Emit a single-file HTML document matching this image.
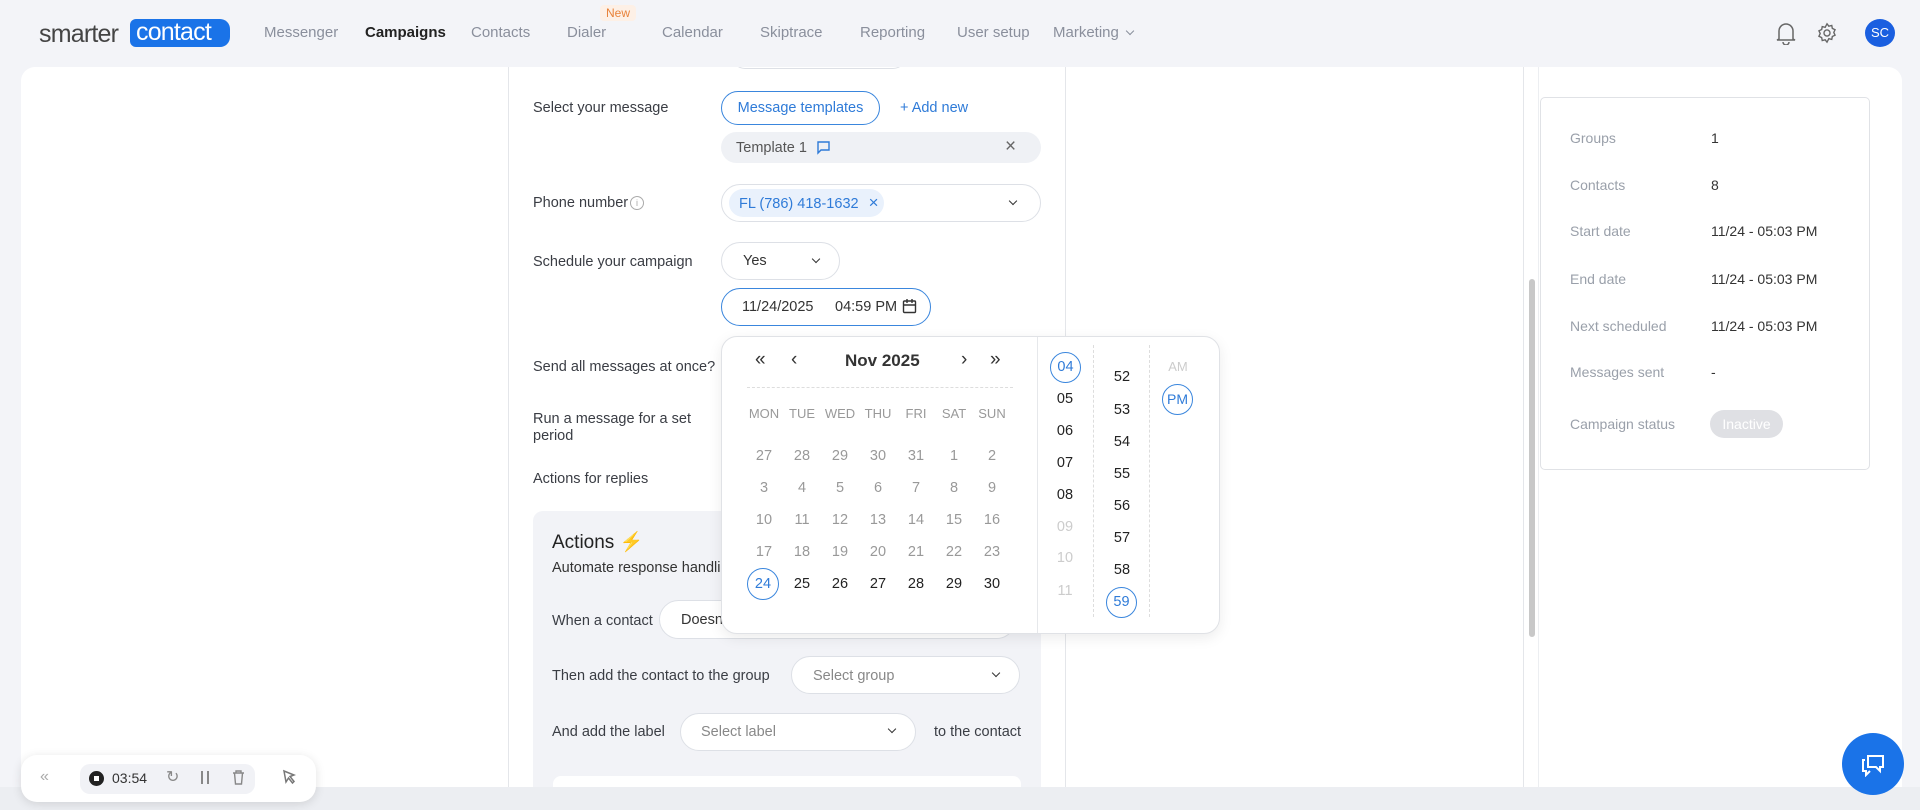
<!DOCTYPE html>
<html><head><meta charset="utf-8"><style>
*{box-sizing:border-box;margin:0;padding:0}
body{width:1920px;height:810px;overflow:hidden;background:#f3f4f8;font-family:"Liberation Sans",Arial,sans-serif;position:relative;color:#333}
.a{position:absolute;white-space:nowrap}
.nav{font-size:15px;color:#8a8f9c;top:24px}
.lbl{font-size:14.5px;color:#3a3d44}
.pill{position:absolute;border:1px solid #dde0e6;border-radius:22px;background:#fff}
.chev{position:absolute;width:7px;height:7px;border-right:1.6px solid #333;border-bottom:1.6px solid #333;transform:rotate(45deg)}
.cal{font-size:14.5px;text-align:center;width:30px;margin-left:-15px}
.wd{font-size:13px;text-align:center;width:36px;margin-left:-18px;color:#999}
.circ{border:1.3px solid #3a86dd;border-radius:50%;color:#2f7bd8}
.rl{font-size:14px;color:#9aa0aa}
.rv{font-size:14px;color:#333}
</style></head><body>
<!-- logo -->
<div class="a" style="left:39px;top:20px;font-size:25px;color:#444;letter-spacing:-0.8px">smarter</div>
<div class="a" style="left:130px;top:19px;width:100px;height:28px;background:#1a73e8;border-radius:6px 10px 10px 6px;color:#fff;font-size:25px;line-height:27px;padding-left:6px;letter-spacing:-0.8px">contact</div>
<div class="a nav" style="left:264px">Messenger</div>
<div class="a nav" style="left:365px;color:#222;font-weight:bold">Campaigns</div>
<div class="a nav" style="left:471px">Contacts</div>
<div class="a nav" style="left:567px">Dialer</div>
<div class="a" style="left:600px;top:5px;font-size:12px;color:#e8823a;background:#fdf0e6;padding:1px 6px;border-radius:4px">New</div>
<div class="a nav" style="left:662px">Calendar</div>
<div class="a nav" style="left:760px">Skiptrace</div>
<div class="a nav" style="left:860px">Reporting</div>
<div class="a nav" style="left:957px">User setup</div>
<div class="a nav" style="left:1053px">Marketing</div>
<div class="chev" style="left:1127px;top:28px;border-color:#8a8f9c;width:6px;height:6px;border-width:1.3px"></div>
<!-- bell -->
<svg class="a" style="left:1775px;top:21px" width="22" height="24" viewBox="0 0 22 24" fill="none" stroke="#666" stroke-width="1.5"><path d="M4 18V10a7 7 0 0 1 14 0v8l2 1H2z"/><path d="M8 21a3 3 0 0 0 6 0"/></svg>
<svg class="a" style="left:1816px;top:22px" width="22" height="22" viewBox="0 0 24 24" fill="none" stroke="#666" stroke-width="1.5"><circle cx="12" cy="12" r="3.3"/><path d="M12 2l2 2.6 3.2-.8.6 3.2 3 1.4-1.4 3 1.4 3-3 1.4-.6 3.2-3.2-.8L12 22l-2-2.6-3.2.8-.6-3.2-3-1.4 1.4-3-1.4-3 3-1.4.6-3.2 3.2.8z"/></svg>
<div class="a" style="left:1865px;top:19px;width:30px;height:28px;border-radius:50%;background:#1a5fe0;color:#fff;font-size:13px;text-align:center;line-height:28px">SC</div>
<!-- main panel -->
<div class="a" style="left:21px;top:67px;width:1881px;height:720px;background:#fff;border-radius:14px 14px 0 0"></div>
<div class="a" style="left:0;top:787px;width:1920px;height:23px;background:#eceef2"></div>
<div class="a" style="left:508px;top:67px;width:1px;height:720px;background:#e4e6ea"></div>
<div class="a" style="left:1065px;top:67px;width:1px;height:720px;background:#e4e6ea"></div>
<div class="a" style="left:1523px;top:67px;width:1px;height:720px;background:#e4e6ea"></div>
<div class="a" style="left:1529px;top:279px;width:6px;height:358px;background:#c8c8c8;border-radius:3px"></div>
<div class="a" style="left:1538px;top:67px;width:1px;height:720px;background:#eceef1"></div>
<!-- right card -->
<div class="a" style="left:1540px;top:97px;width:330px;height:373px;border:1px solid #e0e2e6;border-radius:5px"></div>
<div class="a rl" style="left:1570px;top:130px">Groups</div><div class="a rv" style="left:1711px;top:130px">1</div>
<div class="a rl" style="left:1570px;top:177px">Contacts</div><div class="a rv" style="left:1711px;top:177px">8</div>
<div class="a rl" style="left:1570px;top:223px">Start date</div><div class="a rv" style="left:1711px;top:223px">11/24 - 05:03 PM</div>
<div class="a rl" style="left:1570px;top:271px">End date</div><div class="a rv" style="left:1711px;top:271px">11/24 - 05:03 PM</div>
<div class="a rl" style="left:1570px;top:318px">Next scheduled</div><div class="a rv" style="left:1711px;top:318px">11/24 - 05:03 PM</div>
<div class="a rl" style="left:1570px;top:364px">Messages sent</div><div class="a rv" style="left:1711px;top:364px">-</div>
<div class="a rl" style="left:1570px;top:416px">Campaign status</div>
<div class="a" style="left:1710px;top:410px;width:73px;height:28px;border-radius:14px;background:#dfe0e4;color:#fff;font-size:14px;text-align:center;line-height:28px">Inactive</div>
<!-- form -->
<div class="a" style="left:731px;top:54px;width:176px;height:15px;border:1px solid #dde0e6;border-top:none;border-radius:0 0 14px 14px"></div>
<div class="a" style="left:725px;top:40px;width:190px;height:27px;background:#f3f4f8"></div>
<div class="a lbl" style="left:533px;top:100px">Select your message</div>
<div class="pill" style="left:721px;top:91px;width:159px;height:34px;border-color:#3a86dd;color:#2f7bd8;font-size:14.5px;text-align:center;line-height:32px">Message templates</div>
<div class="a" style="left:900px;top:100px;font-size:14.5px;color:#2f7bd8">+ Add new</div>
<div class="a" style="left:721px;top:132px;width:320px;height:31px;background:#eff1f5;border-radius:16px"></div>
<div class="a" style="left:736px;top:140px;font-size:14.5px;color:#555">Template 1</div>
<svg class="a" style="left:816px;top:140px" width="15" height="15" viewBox="0 0 15 15" fill="none" stroke="#2f7bd8" stroke-width="1.4"><path d="M2 2h11v8H5l-3 3z"/></svg>
<div class="a" style="left:1005px;top:136px;font-size:19px;color:#666">×</div>
<div class="a lbl" style="left:533px;top:195px">Phone number</div>
<div class="a" style="left:630px;top:196px;width:14px;height:14px;border:1px solid #aaa;border-radius:50%;font-size:9px;color:#aaa;text-align:center;line-height:12px">i</div>
<div class="pill" style="left:721px;top:184px;width:320px;height:38px"></div>
<div class="a" style="left:729px;top:189px;width:155px;height:28px;background:#e9f1fc;border-radius:14px;color:#2f7bd8;font-size:14.5px;line-height:28px;padding-left:10px">FL (786) 418-1632 <span style="margin-left:6px;font-size:17px">×</span></div>
<div class="chev" style="left:1010px;top:198px;width:6px;height:6px"></div>
<div class="a lbl" style="left:533px;top:254px">Schedule your campaign</div>
<div class="pill" style="left:721px;top:242px;width:119px;height:38px"></div>
<div class="a" style="left:743px;top:253px;font-size:14.5px;color:#333">Yes</div>
<div class="chev" style="left:813px;top:256px;width:6px;height:6px"></div>
<div class="pill" style="left:721px;top:288px;width:210px;height:38px;border-color:#3a86dd"></div>
<div class="a" style="left:742px;top:299px;font-size:14.5px;color:#333">11/24/2025</div>
<div class="a" style="left:835px;top:299px;font-size:14.5px;color:#333">04:59 PM</div>
<svg class="a" style="left:902px;top:298px" width="15" height="16" viewBox="0 0 15 16" fill="none" stroke="#333" stroke-width="1.4"><rect x="1.5" y="3" width="12" height="11.5" rx="1"/><path d="M1.5 7h12M5 1v4M10 1v4"/></svg>
<div class="a lbl" style="left:533px;top:359px">Send all messages at once?</div>
<div class="a lbl" style="left:533px;top:411px;line-height:17px;white-space:normal;width:180px">Run a message for a set period</div>
<div class="a lbl" style="left:533px;top:471px">Actions for replies</div>
<!-- actions box -->
<div class="a" style="left:533px;top:511px;width:508px;height:276px;background:#f2f3f7;border-radius:10px 10px 0 0"></div>
<div class="a" style="left:552px;top:530px;font-size:19px;color:#222">Actions <span style="color:#f5c542">⚡</span></div>
<div class="a lbl" style="left:552px;top:560px;color:#333">Automate response handling</div>
<div class="a lbl" style="left:552px;top:613px">When a contact</div>
<div class="pill" style="left:659px;top:600px;width:357px;height:39px"></div>
<div class="a" style="left:681px;top:612px;font-size:14.5px;color:#333">Doesn't</div>
<div class="a lbl" style="left:552px;top:668px">Then add the contact to the group</div>
<div class="pill" style="left:791px;top:656px;width:229px;height:38px"></div>
<div class="a" style="left:813px;top:668px;font-size:14.5px;color:#888">Select group</div>
<div class="chev" style="left:993px;top:670px;width:6px;height:6px"></div>
<div class="a lbl" style="left:552px;top:724px">And add the label</div>
<div class="pill" style="left:680px;top:713px;width:236px;height:38px"></div>
<div class="a" style="left:701px;top:724px;font-size:14.5px;color:#888">Select label</div>
<div class="chev" style="left:889px;top:726px;width:6px;height:6px"></div>
<div class="a lbl" style="left:934px;top:724px">to the contact</div>
<div class="a" style="left:553px;top:776px;width:468px;height:11px;background:#fff;border-radius:8px 8px 0 0"></div>
<!-- date popup -->
<div class="a" style="left:721px;top:336px;width:499px;height:298px;background:#fff;border:1px solid #e0e2e6;border-radius:16px;box-shadow:0 4px 14px rgba(0,0,0,.08)"></div>
<div class="a" style="left:1037px;top:337px;width:1px;height:296px;background:#e6e8eb"></div>
<div class="a" style="left:1093px;top:345px;height:272px;border-left:1px dashed #ddd"></div>
<div class="a" style="left:1149px;top:345px;height:272px;border-left:1px dashed #ddd"></div>
<div class="a" style="left:755px;top:349px;font-size:19px;color:#333">«</div>
<div class="a" style="left:791px;top:349px;font-size:19px;color:#333">‹</div>
<div class="a" style="left:845px;top:351px;font-size:17px;color:#333;font-weight:bold">Nov 2025</div>
<div class="a" style="left:961px;top:349px;font-size:19px;color:#333">›</div>
<div class="a" style="left:990px;top:349px;font-size:19px;color:#333">»</div>
<div class="a" style="left:747px;top:387px;width:266px;border-top:1px dashed #ddd"></div>
<div class="a wd" style="left:764px;top:406px">MON</div><div class="a wd" style="left:802px;top:406px">TUE</div><div class="a wd" style="left:840px;top:406px">WED</div><div class="a wd" style="left:878px;top:406px">THU</div><div class="a wd" style="left:916px;top:406px">FRI</div><div class="a wd" style="left:954px;top:406px">SAT</div><div class="a wd" style="left:992px;top:406px">SUN</div>
<div style="color:#999">
<div class="a cal" style="left:764px;top:448px">27</div><div class="a cal" style="left:802px;top:448px">28</div><div class="a cal" style="left:840px;top:448px">29</div><div class="a cal" style="left:878px;top:448px">30</div><div class="a cal" style="left:916px;top:448px">31</div><div class="a cal" style="left:954px;top:448px">1</div><div class="a cal" style="left:992px;top:448px">2</div>
<div class="a cal" style="left:764px;top:480px">3</div><div class="a cal" style="left:802px;top:480px">4</div><div class="a cal" style="left:840px;top:480px">5</div><div class="a cal" style="left:878px;top:480px">6</div><div class="a cal" style="left:916px;top:480px">7</div><div class="a cal" style="left:954px;top:480px">8</div><div class="a cal" style="left:992px;top:480px">9</div>
<div class="a cal" style="left:764px;top:512px">10</div><div class="a cal" style="left:802px;top:512px">11</div><div class="a cal" style="left:840px;top:512px">12</div><div class="a cal" style="left:878px;top:512px">13</div><div class="a cal" style="left:916px;top:512px">14</div><div class="a cal" style="left:954px;top:512px">15</div><div class="a cal" style="left:992px;top:512px">16</div>
<div class="a cal" style="left:764px;top:544px">17</div><div class="a cal" style="left:802px;top:544px">18</div><div class="a cal" style="left:840px;top:544px">19</div><div class="a cal" style="left:878px;top:544px">20</div><div class="a cal" style="left:916px;top:544px">21</div><div class="a cal" style="left:954px;top:544px">22</div><div class="a cal" style="left:992px;top:544px">23</div>
</div>
<div class="a circ" style="left:747px;top:568px;width:32px;height:32px;text-align:center;line-height:30px;font-size:14.5px">24</div>
<div style="color:#222">
<div class="a cal" style="left:802px;top:576px">25</div><div class="a cal" style="left:840px;top:576px">26</div><div class="a cal" style="left:878px;top:576px">27</div><div class="a cal" style="left:916px;top:576px">28</div><div class="a cal" style="left:954px;top:576px">29</div><div class="a cal" style="left:992px;top:576px">30</div>
</div>
<!-- hours -->
<div class="a circ" style="left:1050px;top:352px;width:31px;height:31px;text-align:center;line-height:29px;font-size:14.5px">04</div>
<div class="a cal" style="left:1065px;top:391px;color:#222">05</div>
<div class="a cal" style="left:1065px;top:423px;color:#222">06</div>
<div class="a cal" style="left:1065px;top:455px;color:#222">07</div>
<div class="a cal" style="left:1065px;top:487px;color:#222">08</div>
<div class="a cal" style="left:1065px;top:519px;color:#ccc">09</div>
<div class="a cal" style="left:1065px;top:550px;color:#ccc">10</div>
<div class="a cal" style="left:1065px;top:583px;color:#ccc">11</div>
<!-- minutes -->
<div class="a cal" style="left:1122px;top:369px;color:#222">52</div>
<div class="a cal" style="left:1122px;top:402px;color:#222">53</div>
<div class="a cal" style="left:1122px;top:434px;color:#222">54</div>
<div class="a cal" style="left:1122px;top:466px;color:#222">55</div>
<div class="a cal" style="left:1122px;top:498px;color:#222">56</div>
<div class="a cal" style="left:1122px;top:530px;color:#222">57</div>
<div class="a cal" style="left:1122px;top:562px;color:#222">58</div>
<div class="a circ" style="left:1106px;top:587px;width:31px;height:31px;text-align:center;line-height:29px;font-size:14.5px">59</div>
<div class="a cal" style="left:1178px;top:359px;color:#ccc;font-size:13px">AM</div>
<div class="a circ" style="left:1162px;top:384px;width:31px;height:31px;text-align:center;line-height:29px;font-size:14px">PM</div>
<!-- recorder -->
<div class="a" style="left:21px;top:755px;width:295px;height:47px;background:#fff;border-radius:16px;box-shadow:0 2px 10px rgba(0,0,0,.12)"></div>
<div class="a" style="left:40px;top:768px;font-size:16px;color:#aaa">«</div>
<div class="a" style="left:80px;top:764px;width:175px;height:30px;background:#f1f2f6;border-radius:10px"></div>
<div class="a" style="left:89px;top:771px;width:15px;height:15px;border-radius:50%;background:#222"></div>
<div class="a" style="left:94px;top:776px;width:5px;height:5px;background:#fff"></div>
<div class="a" style="left:112px;top:770px;font-size:14px;color:#333">03:54</div>
<div class="a" style="left:166px;top:767px;font-size:16px;color:#888">↻</div>
<div class="a" style="left:201px;top:771px;height:13px;border-left:2px solid #888;border-right:2px solid #888;width:8px"></div>
<svg class="a" style="left:232px;top:770px" width="13" height="15" viewBox="0 0 13 15" fill="none" stroke="#888" stroke-width="1.4"><path d="M1 3h11M4 3V1h5v2M2.5 3l1 11h6l1-11"/></svg>
<svg class="a" style="left:282px;top:769px" width="14" height="16" viewBox="0 0 14 16" fill="none" stroke="#777" stroke-width="1.5"><path d="M2 2l10 4-4 1.5 4 5-1.5 1.5-4-5L4 13z"/></svg>
<!-- chat -->
<div class="a" style="left:1842px;top:733px;width:62px;height:62px;border-radius:50%;background:#1a73e8"></div>
<svg class="a" style="left:1860px;top:751px" width="26" height="26" viewBox="0 0 26 26" fill="none" stroke="#fff" stroke-width="2"><path d="M8 5h15v11h-3v4l-4-4H8z"/><path d="M5 9H3v11h3v4l4-4"/></svg>
</body></html>
